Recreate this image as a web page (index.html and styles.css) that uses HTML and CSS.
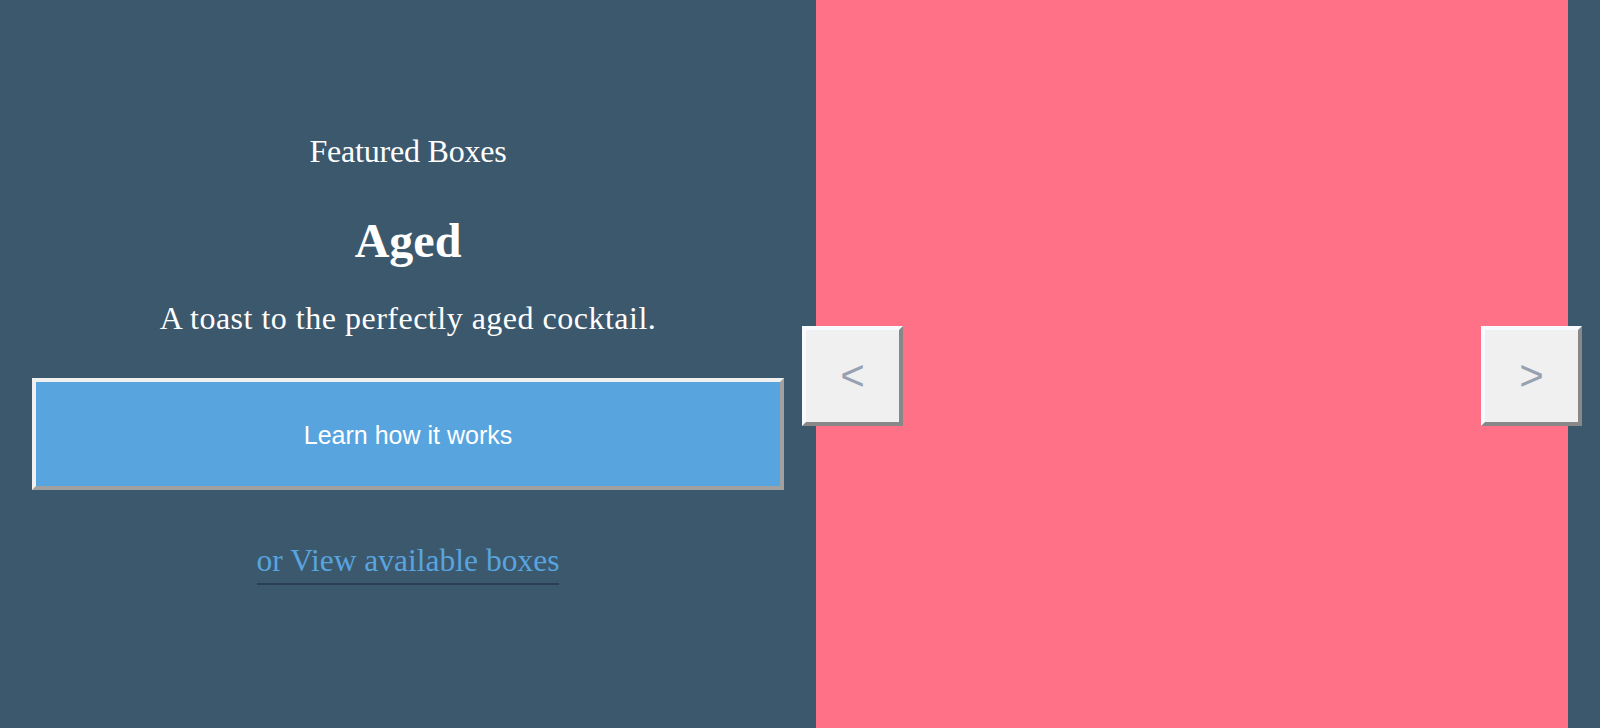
FILE: index.html
```html
<!DOCTYPE html>
<html lang="en">
<head>
<meta charset="utf-8">
<title>Featured Boxes</title>
<link rel="stylesheet" href="styles.css">
</head>
<body>
<div class="page">
  <section class="intro">
    <p class="eyebrow">Featured Boxes</p>
    <h1 class="title">Aged</h1>
    <p class="tagline">A toast to the perfectly aged cocktail.</p>
    <button class="cta" type="button">Learn how it works</button>
    <a class="more" href="#">or View available boxes</a>
  </section>
  <section class="slider">
    <button class="nav nav-prev" type="button">&lt;</button>
    <button class="nav nav-next" type="button">&gt;</button>
  </section>
  <div class="edge"></div>
</div>
</body>
</html>
```

FILE: styles.css
```css
html, body {
  margin: 0;
  padding: 0;
}
body {
  background: #3c586d;
  font-family: "Liberation Serif", "Times New Roman", serif;
  color: #ffffff;
}
.page {
  display: flex;
  height: 728px;
  width: 1600px;
  overflow: hidden;
}
.intro {
  width: 816px;
  box-sizing: border-box;
  padding: 131px 32px 0;
  display: flex;
  flex-direction: column;
  align-items: center;
  text-align: center;
}
.eyebrow {
  margin: 0;
  font-size: 32px;
  line-height: 40px;
  letter-spacing: -0.2px;
}
.title {
  margin: 42px 0 0;
  font-size: 48px;
  line-height: 56px;
  font-weight: bold;
}
.tagline {
  margin: 29px 0 0;
  font-size: 32px;
  line-height: 40px;
  letter-spacing: 0.5px;
}
.cta {
  margin-top: 40px;
  width: 100%;
  height: 112px;
  box-sizing: border-box;
  border: 4px solid;
  border-color: #f0f0f0 #a0a0a0 #a0a0a0 #f0f0f0;
  background: #58a4df;
  color: #ffffff;
  font-family: "Liberation Sans", Arial, sans-serif;
  font-size: 25px;
  padding: 2px 0 0;
}
.more {
  margin-top: 53px;
  display: inline-block;
  font-size: 31.5px;
  line-height: normal;
  color: #58a4df;
  text-decoration: none;
  padding-bottom: 4px;
  border-bottom: 2px solid #2b3f52;
}
.slider {
  position: relative;
  width: 752px;
  height: 728px;
  background: #ff7186;
}
.edge {
  flex: 1;
}
.nav {
  position: absolute;
  top: 326px;
  width: 101px;
  height: 100px;
  box-sizing: border-box;
  border: 4px solid;
  border-color: #f7faff #888888 #888888 #f7faff;
  background: #f0f0f0;
  color: #98a1b1;
  font-family: "Liberation Sans", Arial, sans-serif;
  font-size: 42px;
  padding: 0;
}
.nav-prev {
  left: -14px;
}
.nav-next {
  right: -14px;
}
```
